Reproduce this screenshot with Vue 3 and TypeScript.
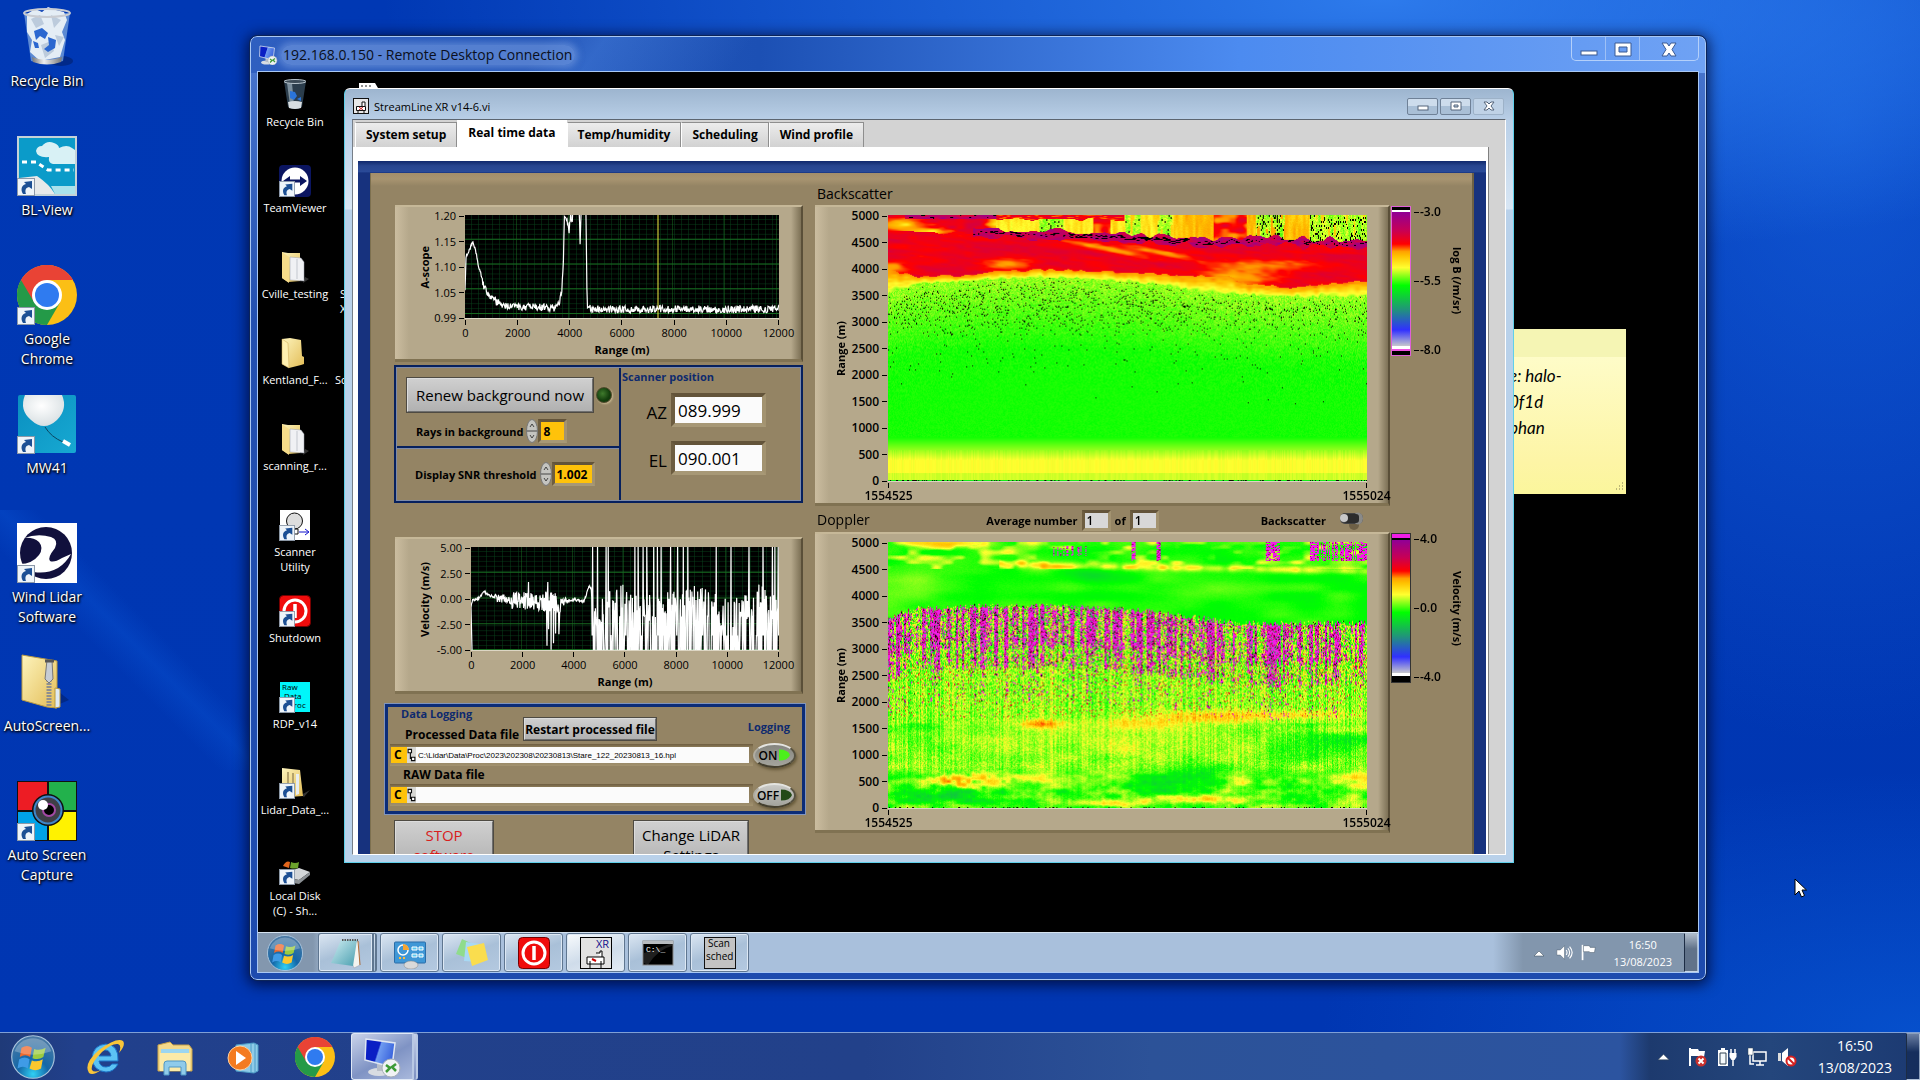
<script setup lang="ts">
import { onMounted, ref } from 'vue'

type Rgb = [number, number, number]
type Knot = [number, number]

interface Shortcut {
  icon: string
  label: string[]
  link?: boolean
}

interface Lettering {
  text: string
  x: number
  y: number
  size: number
  fill?: string
  mono?: boolean
}

const hostIcons: Shortcut[] = [
  { icon: 'bin-full', label: ['Recycle Bin'] },
  { icon: 'blview', label: ['BL-View'], link: true },
  { icon: 'chrome', label: ['Google', 'Chrome'], link: true },
  { icon: 'balloon', label: ['MW41'], link: true },
  { icon: 'windlidar', label: ['Wind Lidar', 'Software'], link: true },
  { icon: 'zip', label: ['AutoScreen...'] },
  { icon: 'capture', label: ['Auto Screen', 'Capture'], link: true },
]

const remoteIcons: Shortcut[] = [
  { icon: 'bin-empty', label: ['Recycle Bin'] },
  { icon: 'teamviewer', label: ['TeamViewer'], link: true },
  { icon: 'folder-doc', label: ['Cville_testing'] },
  { icon: 'folder', label: ['Kentland_F...'] },
  { icon: 'folder-doc', label: ['scanning_r...'] },
  { icon: 'scanner', label: ['Scanner', 'Utility'], link: true },
  { icon: 'power', label: ['Shutdown'], link: true },
  { icon: 'rawdata', label: ['RDP_v14'], link: true },
  { icon: 'folder-open', label: ['Lidar_Data_...'], link: true },
  { icon: 'disk', label: ['Local Disk', '(C) - Sh...'], link: true },
]

const lettering: Record<string, Lettering[]> = {
  rawdata: [
    { text: 'Raw', x: 3, y: 9, size: 8 },
    { text: 'Data', x: 5, y: 18, size: 8 },
    { text: 'Proc', x: 10, y: 27, size: 8 },
  ],
  streamline: [{ text: 'XR', x: 16, y: 11, size: 11, fill: '#11108c' }],
  cmd: [{ text: 'C:\\_', x: 4, y: 15, size: 8, fill: '#fff', mono: true }],
  sched: [
    { text: 'Scan', x: 4, y: 10, size: 10 },
    { text: 'sched', x: 2, y: 23, size: 10 },
  ],
}

const remoteTasks = [
  { icon: 'notepad', name: 'Notepad', stacked: true, active: false },
  { icon: 'control', name: 'Control Panel', stacked: false, active: false },
  { icon: 'sticky', name: 'Sticky Notes', stacked: false, active: false },
  { icon: 'power', name: 'Shutdown', stacked: false, active: false },
  { icon: 'streamline', name: 'StreamLine XR', stacked: false, active: true },
  { icon: 'cmd', name: 'Command Prompt', stacked: false, active: false },
  { icon: 'sched', name: 'Scan scheduler', stacked: false, active: false },
]

const hostTasks = [
  { icon: 'ie', name: 'Internet Explorer' },
  { icon: 'explorer', name: 'Windows Explorer' },
  { icon: 'wmp', name: 'Media Player' },
  { icon: 'chrome', name: 'Google Chrome' },
]

const tabs = ['System setup', 'Real time data', 'Temp/humidity', 'Scheduling', 'Wind profile']
const activeTab = ref('Real time data')

const rangeTicks = ['0', '2000', '4000', '6000', '8000', '10000', '12000']
const heightTicks = ['5000', '4500', '4000', '3500', '3000', '2500', '2000', '1500', '1000', '500', '0']

const rays = ref('8')
const snr = ref('1.002')
const azimuth = ref('089.999')
const elevation = ref('090.001')
const avgIndex = ref('1')
const avgTotal = ref('1')
const processedPath = ref('C:\\Lidar\\Data\\Proc\\2023\\202308\\20230813\\Stare_122_20230813_16.hpl')
const rawPath = ref('')

function hash(x: number, y: number): number {
  let n = (Math.imul(x | 0, 374761393) + Math.imul(y | 0, 668265263)) | 0
  n = Math.imul(n ^ (n >>> 13), 1274126177)
  return ((n ^ (n >>> 16)) >>> 0) / 4294967296
}

function smooth(x: number, y: number): number {
  const xi = Math.floor(x)
  const yi = Math.floor(y)
  const fx = (x - xi) * (x - xi) * (3 - 2 * (x - xi))
  const fy = (y - yi) * (y - yi) * (3 - 2 * (y - yi))
  const a = hash(xi, yi) * (1 - fx) + hash(xi + 1, yi) * fx
  const b = hash(xi, yi + 1) * (1 - fx) + hash(xi + 1, yi + 1) * fx
  return a * (1 - fy) + b * fy
}

function along(knots: Knot[], x: number): number {
  for (let i = 1; i < knots.length; i++) {
    if (x <= knots[i][0]) {
      const [x0, y0] = knots[i - 1]
      const [x1, y1] = knots[i]
      return y0 + ((y1 - y0) * (x - x0)) / (x1 - x0 || 1)
    }
  }
  return knots[knots.length - 1][1]
}

const scale: [number, Rgb][] = [
  [0, [144, 0, 150]],
  [0.12, [200, 0, 84]],
  [0.22, [255, 0, 0]],
  [0.29, [255, 150, 0]],
  [0.34, [255, 190, 0]],
  [0.42, [255, 255, 48]],
  [0.53, [0, 255, 0]],
  [0.7, [32, 150, 120]],
  [0.86, [48, 48, 255]],
  [0.96, [200, 200, 204]],
  [1, [255, 255, 255]],
]

function tint(t: number): Rgb {
  const v = Math.min(1, Math.max(0, t))
  for (let i = 1; i < scale.length; i++) {
    if (v <= scale[i][0]) {
      const [t0, a] = scale[i - 1]
      const [t1, b] = scale[i]
      const k = (v - t0) / (t1 - t0)
      return [a[0] + (b[0] - a[0]) * k, a[1] + (b[1] - a[1]) * k, a[2] + (b[2] - a[2]) * k]
    }
  }
  return [255, 255, 255]
}

const BLACK: Rgb = [0, 0, 0]
const OVER: Rgb = [240, 30, 230]

const cloudBase: Knot[] = [[0, 77], [31, 69], [95, 64], [168, 62], [210, 64], [279, 70], [311, 76], [352, 79], [393, 81], [478, 81]]
const redBase: Knot[] = [[0, 54], [26, 61], [72, 60], [104, 56], [168, 54], [233, 57], [302, 61], [338, 60], [352, 68], [398, 72], [435, 69], [478, 66]]
const purpleLine: Knot[] = [[0, 17], [86, 18], [187, 20], [260, 24], [320, 27], [384, 26], [478, 28]]

function spot(x: number, y: number, cx: number, cy: number, rx: number, ry: number): number {
  const d = ((x - cx) / rx) ** 2 + ((y - cy) / ry) ** 2
  return Math.exp(-d)
}

function backscatter(x: number, y: number): Rgb {
  const fine = hash(x, y) - 0.5
  const base = along(cloudBase, x) + (smooth(x / 4, 9) - 0.5) * 3
  const red = along(redBase, x) + (smooth(x / 6, 3) - 0.5) * 3
  const line = along(purpleLine, x) + (smooth(x / 11, 5) - 0.5) * 3
  if (y > 265) return fine > 0.2 ? BLACK : tint(0.56)
  if (y > base) {
    const depth = y - base
    let t = 0.465 + Math.min(depth, 70) * 0.0008 + fine * 0.06 * Math.max(0.25, 1 - depth / 150)
    if (y > 222) t = 0.525 - Math.min(1, (y - 222) / 24) * 0.105
    if (y > 258) t += 0.02
    if (y > 235) t += (hash(x, 77) - 0.5) * 0.015
    const density = y < 122 ? 0.08 * Math.min(1, depth / 14) * (1 - Math.max(0, y - 92) / 36) : y < 160 ? 0.006 : y < 190 ? 0.0015 : 0
    if (hash(x + 13, y + 500) < density) return BLACK
    return tint(t)
  }
  if (y > red) {
    const k = (y - red) / Math.max(1, base - red)
    return tint(0.28 + k * 0.17 + (smooth(x / 6, y / 2) - 0.5) * 0.05)
  }
  if (x > 84 && Math.abs(y - line) < 1 + smooth(x / 9, 40) * 6) {
    const core = smooth(x / 2.5, y + 11)
    if (Math.abs(y - line) < 2 && core > (x > 180 && x < 325 ? 0.5 : 0.78)) return BLACK
    return tint(0.03 + smooth(x / 6, y / 2) * 0.13)
  }
  if (y < line) {
    if (x < 108) {
      if (y < 4 && x > 16) return smooth(x / 3, y / 2 + 60) > 0.82 ? BLACK : tint(0.03 + smooth(x / 6, y / 3) * 0.14)
      const warm = spot(x, y, 14, 10, 22, 6) + spot(x, y, 108, 7, 10, 9) + spot(x, y, 40, 16, 22, 3)
      return tint(0.18 + warm * 0.19 + (smooth(x / 9, y / 3) - 0.5) * 0.08)
    }
    if (y < 2 + smooth(x / 8, 21) * 4 && x < 236) return tint(0.14 + smooth(x / 4, y) * 0.14)
    const streak = smooth(x / 2.5, y / 16 + 30)
    if ((x > 204 && x < 222) || (x > 324 && x < 358)) return tint(0.16 + smooth(x / 8, y / 5) * 0.16)
    const green = (x > 366 && x < 396) || x > 420 || (x > 236 && x < 252) || (x > 150 && x < 175) || (x > 268 && x < 284)
    if (green && streak > 0.2) {
      if (hash(x, (y >> 1) + 90) < (x > 366 ? 0.14 : 0.06)) return BLACK
      return tint(0.42 + streak * 0.07 + fine * 0.05)
    }
    const warmth = x > 284 && x < 420 ? 0.3 : 0.35
    return tint(warmth + streak * 0.08 + fine * 0.02)
  }
  const slope = y - x * 0.09
  let t = 0.19 + (smooth(x / 34, slope / 5 + 80) - 0.5) * 0.05 + (smooth(x / 8, slope / 2) - 0.5) * 0.035
  t += spot(x, y, 118, 49, 22, 6) * 0.11 + spot(x, y, 215, 33 + (x - 215) * 0.2, 40, 3) * 0.11
  t += spot(x, y, 275, 38 + (x - 275) * 0.2, 34, 3) * 0.12 + spot(x, y, 370, 50, 50, 6) * 0.1
  t += spot(x, y, 345, 64, 40, 10) * 0.12 + spot(x, y, 0, 52, 18, 6) * 0.1
  return tint(t)
}

const layerBase: Knot[] = [[0, 76], [31, 66], [86, 64], [168, 64], [210, 66], [256, 69], [302, 75], [348, 81], [478, 81]]

function doppler(x: number, y: number): Rgb {
  const fine = hash(x + 900, y) - 0.5
  const column = hash(x, 4000)
  const base = along(layerBase, x) + (hash(x, 31) - 0.5) * 6
  const wide = smooth(x / 30, y / 9 + 200) - 0.5
  if (y > 265 && hash(x, 8) > 0.85) return BLACK
  if (y < base) {
    if (y < 19) {
      const hot = (x > 420 && column > 0.25) || (x > 376 && x < 391) || (x > 242 && x < 247) || (x > 267 && x < 272) || (x > 160 && x < 198 && column > 0.72 && y > 3 && y < 14)
      if (hot && hash(x >> 1, y + 60) > 0.25) return fine > 0.34 ? tint(0.05) : OVER
    }
    let t = 0.52 + wide * 0.05
    if (y < 27) t -= Math.max(0, smooth(x / 12, y / 5 + 70) - 0.5) * 0.2
    t -= spot(x, y, 65, 1, 40, 4) * 0.14
    t -= x > 110 ? spot(x, y, x, 20 + x * 0.018, 1, 3.5) * (0.04 + smooth(x / 7, 300) * 0.09) : 0
    t -= spot(x, y, 5, 46, 70, 16) * 0.045 + spot(x, y, 320, 48, 70, 9) * 0.025
    t += spot(x, y, 200, 33, 25, 6) * 0.05
    return tint(t + fine * 0.01)
  }
  const depth = y - base
  const band = spot(x, y, 153, 182, 20, 4) * 0.17 + spot(x, y, 250, 182, 50, 6) * 0.08 + spot(x, y, 320, 175, 50, 6) * 0.11 + spot(x, y, 405, 173, 50, 4) * 0.08
  if (y < 182) {
    const strong = x < 330 ? 1 : 0.75
    const stripe = hash(x >> 1, 610)
    const reach = depth < 40 ? 0.9 : depth < 62 ? 0.55 : depth < 95 ? 0.22 : 0.12 * (1 - (y - 140) / 44)
    const gain = 0.2 + stripe * stripe * 1.1 + smooth(x / 5, 620) * 0.25 + (x > 380 && x < 392 ? 0.5 : 0) + (x > 258 && x < 262 ? 0.6 : 0)
    const p = hash(x >> 1, (y >> 2) + 7000) * 0.5 + hash(x, y + 7500) * 0.5
    if (p < reach * gain * strong) {
      const k = hash(x + 77, y)
      if (k > 0.94) return BLACK
      if (k > 0.7) return tint(0.02 + k * 0.1)
      if (k > 0.62) return tint(0.64)
      return OVER
    }
    const grain = depth < 60 ? 0.2 : 0.14 - ((y - 125) / 57) * 0.05
    let t = 0.465 + fine * grain + (column - 0.5) * 0.08 - band
    if (y > 110 && y < 176 && hash(x, y + 33) > 0.97) t = 0.2
    return tint(t)
  }
  let t = 0.465 + (column - 0.5) * 0.06 + fine * 0.07 + wide * 0.05 - band
  t -= spot(x, y, 440, 188, 40, 4) * 0.06 + spot(x, y, 250, 205, 70, 12) * 0.025
  t += spot(x, y, 440, 198, 60, 18) * 0.07 + spot(x, y, 35, 186, 22, 6) * 0.06
  t += spot(x, y, 310, 236, 40, 12) * 0.12
  if (y > 225) {
    const k = Math.min(1, (y - 225) / 10)
    t = t * (1 - k * 0.6) + 0.52 * k * 0.6
    t += (smooth(x / 16, y / 5 + 500) - 0.5) * 0.1 * k + (smooth(x / 5, y / 3 + 900) - 0.5) * 0.05 * k
    t -= spot(x, y, 80, 239, 34, 6) * 0.22 * smooth(x / 5, y / 4) * 1.6 + spot(x, y, 150, 236, 22, 5) * 0.13
    t -= spot(x, y, 310, 258, 50, 4) * 0.13 + spot(x, y, 220, 262, 40, 3) * 0.1 + spot(x, y, 350, 242, 14, 6) * 0.1
    t -= spot(x, y, 470, 238, 22, 8) * 0.1
    t += spot(x, y, 60, 254, 60, 6) * 0.09 + spot(x, y, 270, 246, 30, 8) * 0.07
  }
  return tint(t)
}

const backscatterMap = ref<HTMLCanvasElement | null>(null)
const dopplerMap = ref<HTMLCanvasElement | null>(null)

function paint(canvas: HTMLCanvasElement | null, field: (x: number, y: number) => Rgb) {
  const ctx = canvas?.getContext('2d')
  if (!canvas || !ctx) return
  const image = ctx.createImageData(canvas.width, canvas.height)
  for (let y = 0; y < canvas.height; y++) {
    for (let x = 0; x < canvas.width; x++) {
      const [r, g, b] = field(x, y)
      const i = (y * canvas.width + x) * 4
      image.data[i] = r
      image.data[i + 1] = g
      image.data[i + 2] = b
      image.data[i + 3] = 255
    }
  }
  ctx.putImageData(image, 0, 0)
}

onMounted(() => {
  paint(backscatterMap.value, backscatter)
  paint(dopplerMap.value, doppler)
})

const scopeKnots: Knot[] = [
  [0, 1.045], [40, 1.115], [180, 1.13], [300, 1.146], [400, 1.13], [500, 1.1], [650, 1.066], [850, 1.038],
  [1100, 1.025], [1500, 1.016], [2000, 1.013], [3400, 1.011], [3600, 1.02], [3700, 1.05], [3750, 1.09],
  [3800, 1.2], [3900, 1.19], [3980, 1.17], [4040, 1.2], [4100, 1.19], [4140, 1.22], [4360, 1.22],
  [4400, 1.14], [4440, 1.22], [4620, 1.22], [4670, 1.016], [4800, 1.008], [12000, 1.008],
]

function scopeLine(): string {
  const pts: string[] = []
  for (let r = 0; r <= 12000; r += 20) {
    const noise = (hash(r, 1) - 0.5) * (r < 600 ? 0.006 : 0.015)
    const v = Math.min(1.21, along(scopeKnots, r) + noise)
    pts.push(`${((r / 12000) * 314).toFixed(1)},${(((1.2 - v) / 0.21) * 104).toFixed(1)}`)
  }
  return pts.join(' ')
}

const velocityKnots: Knot[] = [[0, -0.8], [60, -0.2], [300, 0], [500, 0.7], [700, 0.3], [1200, 0], [1500, -0.2], [2700, -0.3], [3500, -0.4], [4000, -0.1], [4400, -0.3], [4600, 1.2], [4680, 0.9]]

function velocityLine(): string {
  const pts: string[] = ['1,104']
  for (let r = 0; r <= 12000; r += 16) {
    const n = hash(r, 12) - 0.5
    const k = hash(r, 13)
    let v = 0
    if (r < 4700) {
      const amp = r < 900 ? 0.2 : r < 1600 ? 0.8 : r < 2700 ? 1.7 : r < 3480 ? 2 : r < 3700 ? 0.8 : 0.25
      v = along(velocityKnots, r) + n * amp
      if (r > 2700 && r < 3450 && k > 0.7) v = -0.6 - k * 5 * hash(r, 19)
      if (r > 1600 && r < 3400 && k < 0.01) v = 1.6
    } else {
      v = -0.8 + n * 3.4 + Math.sin(r / 420) * 0.5
      if (k > 0.93) v = 5.4
      else if (k < 0.5) v = k < 0.4 ? -5.4 : -3.6
    }
    v = Math.max(-5.1, Math.min(5.1, v))
    pts.push(`${((r / 12000) * 308).toFixed(1)},${(((5 - v) / 10) * 104).toFixed(1)}`)
  }
  return pts.join(' ')
}

const scopeTrace = scopeLine()
const velocityTrace = velocityLine()
</script>

<template>
  <svg class="sprite" aria-hidden="true">
    <defs>
      <linearGradient id="g-folder" x1="0" y1="0" x2="1" y2="1">
        <stop offset="0" stop-color="#fdf4bd" /><stop offset="1" stop-color="#e3bd57" />
      </linearGradient>
      <linearGradient id="g-screen" x1="0" y1="0" x2="1" y2="0.3">
        <stop offset="0" stop-color="#0a1fc4" /><stop offset="0.5" stop-color="#0a1fc4" /><stop offset="0.55" stop-color="#6f9bf0" /><stop offset="1" stop-color="#3c66de" />
      </linearGradient>
      <linearGradient id="g-teal" x1="0" y1="0" x2="1" y2="1">
        <stop offset="0" stop-color="#0a8fc0" /><stop offset="1" stop-color="#17a9d2" />
      </linearGradient>
      <radialGradient id="g-orb" cx="0.5" cy="0.9" r="0.9">
        <stop offset="0" stop-color="#2fd0f4" /><stop offset="0.4" stop-color="#1467a8" /><stop offset="1" stop-color="#4d7aa4" />
      </radialGradient>
      <radialGradient id="g-balloon" cx="0.45" cy="0.35" r="0.7">
        <stop offset="0" stop-color="#ffffff" /><stop offset="1" stop-color="#d5dde0" />
      </radialGradient>
      <linearGradient id="g-note" x1="0" y1="0" x2="1" y2="1">
        <stop offset="0" stop-color="#cfeef2" /><stop offset="1" stop-color="#4a9fb0" />
      </linearGradient>
      <linearGradient id="g-metal" x1="0" y1="0" x2="1" y2="0">
        <stop offset="0" stop-color="#777" /><stop offset="0.4" stop-color="#eee" /><stop offset="1" stop-color="#777" />
      </linearGradient>
    </defs>
    <symbol id="arrow" viewBox="0 0 18 18">
      <rect x="0.5" y="0.5" width="17" height="17" fill="#eef4fa" stroke="#8c98a8" />
      <path d="M6 16c-3-5-1-9 3-10L7 4l8-1v8l-3-2c-4 1-4 4-3 7z" fill="#1c4f94" />
    </symbol>
    <symbol id="bin-full" viewBox="0 0 60 60">
      <ellipse cx="44" cy="54" rx="12" ry="5" fill="#02206c" opacity="0.6" />
      <path d="M7 6l7 48q16 5 32 0l7-48z" fill="#7ba5de" opacity="0.75" />
      <path d="M10 7l8-5 7 3 6-5 8 3 8 2 3 8-5 12 3 8-5 17-20 4-10-9 2-12-5-8z" fill="#e4edf5" />
      <path d="M14 12l9-4 4 9-8 4zM34 8l10 5-7 8zM24 38l10-4 3 10-9 7zM38 28l9 2-5 9z" fill="#bccbdc" />
      <path d="M17 24l8-3 6 5-3 6-5-3-4 4zM31 30l8 3-1 8-7 4-4-3 5-4zM16 34l5 2 1 5-4 0z" fill="#2b67d0" />
      <ellipse cx="30" cy="6" rx="23" ry="4" fill="none" stroke="#c9ccd2" stroke-width="2" />
      <path d="M15 50q15 6 30 0l-1 5q-14 5-28 0z" fill="url(#g-metal)" />
    </symbol>
    <symbol id="blview" viewBox="0 0 60 60">
      <rect width="60" height="60" fill="#c4d2d8" /><rect x="2" y="2" width="56" height="56" fill="#0b9bc9" />
      <path d="M19 15q1-5 6-5 5-6 12-3 5 2 5 5 8-4 13 0l3 2v14H36q-5-1-4-7-12 1-13-6z" fill="#d8f1f5" />
      <path d="M5 26h14l12 8h26" fill="none" stroke="#fff" stroke-width="3" stroke-dasharray="5 4" />
      <path d="M2 58V42l18-2q12 8 18 18z" fill="#e7e9ea" /><path d="M34 50h24v8H38z" fill="#a9e2ec" />
    </symbol>
    <symbol id="chrome" viewBox="0 0 60 60">
      <circle cx="30" cy="30" r="30" fill="#fbbf15" />
      <path d="M4 15a30 30 0 0 0 26 45l13-22.500L30 30z" fill="#249a48" />
      <path d="M4 15a30 30 0 0 1 52 0H30L17 37z" fill="#e94335" />
      <circle cx="30" cy="30" r="15" fill="#fff" /><circle cx="30" cy="30" r="12" fill="#2f7bf0" />
    </symbol>
    <symbol id="balloon" viewBox="0 0 60 60">
      <rect x="1" y="1" width="58" height="58" rx="2" fill="url(#g-teal)" />
      <path d="M8 1h37q6 14-5 25-13 12-26 0Q2 16 8 1z" fill="url(#g-balloon)" />
      <path d="M28 33q6 10 18 15" fill="none" stroke="#0b4560" /><path d="M46 47l7 4" stroke="#fff" stroke-width="4" />
    </symbol>
    <symbol id="windlidar" viewBox="0 0 60 60">
      <rect width="60" height="60" fill="#fff" /><circle cx="29" cy="30" r="26" fill="#11103c" />
      <path d="M7 15q14-5 27-1 8 3 4 11-8 10-5 13 4 2 12-3l9-4q-5 9-13 14-11 6-24 4L3 41q12 0 19-9 5-7 0-13Q16 14 7 15z" fill="#fff" />
    </symbol>
    <symbol id="zip" viewBox="0 0 60 60">
      <path d="M38 54l14-6-10-8z" fill="#02206c" opacity="0.6" />
      <path d="M5 3l35 6v47l-10-1L5 48z" fill="url(#g-folder)" stroke="#b99a43" />
      <path d="M38 36l5 1v18l-5 1z" fill="#dfeaf5" stroke="#b99a43" />
      <path d="M32 28v27" stroke="#8f8f8f" stroke-width="5" stroke-dasharray="2 1" />
      <path d="M30 8h5l1 19-4 4-4-4z" fill="#c6ccd4" stroke="#777" />
      <path d="M28 9h9" stroke="#555" stroke-width="3" />
    </symbol>
    <symbol id="capture" viewBox="0 0 60 60">
      <rect width="60" height="60" fill="#111" />
      <path d="M1 1h29v28H1z" fill="#ed1c24" /><path d="M32 1h27v28H32z" fill="#22b14c" />
      <path d="M1 31h29v28H1z" fill="#00a2e8" /><path d="M32 31h27v28H32z" fill="#fff200" />
      <circle cx="31" cy="29" r="16" fill="#111" /><circle cx="31" cy="29" r="13.500" fill="#3f3f46" stroke="#3f86c8" stroke-width="2" />
      <circle cx="32" cy="29" r="6" fill="#000" stroke="#a349a4" stroke-width="2" /><circle cx="26" cy="24" r="5" fill="#fff" />
    </symbol>
    <symbol id="bin-empty" viewBox="0 0 32 32">
      <path d="M5 2l4 26q7 4 14 0l4-26z" fill="#2b3d4c" /><path d="M8 4l3 22h4L13 4z" fill="#7b8e9c" />
      <path d="M11 12l5 1 2 4-3 4-4-2zM18 20l4-2v4z" fill="#2a74d8" />
      <path d="M9 23q7-2 14 0l-1 6q-6 2-12 0z" fill="#d8dde0" />
      <ellipse cx="16" cy="2.500" rx="11" ry="2" fill="#3b4a56" stroke="#b8c4cc" />
    </symbol>
    <symbol id="teamviewer" viewBox="0 0 32 32">
      <rect width="32" height="32" rx="4" fill="#0b1560" /><circle cx="16" cy="16" r="13.500" fill="#fff" />
      <path d="M4 16l7-5v3.500h10V11l7 5-7 5v-3.500H11V21z" fill="#0b1560" />
    </symbol>
    <symbol id="folder" viewBox="0 0 32 32">
      <path d="M3 2l8-1 11 2 1 16 2 1v7l-3 1-12 3-7-4z" fill="url(#g-folder)" /><path d="M3 2l6 4 1 25-7-4z" fill="#fff0b0" stroke="#caa550" stroke-width="0.500" />
    </symbol>
    <symbol id="folder-doc" viewBox="0 0 32 32">
      <path d="M26 26l4 2-6 4z" fill="#333" />
      <path d="M3 1l6 1 12 0v28l-12 1-6-4z" fill="url(#g-folder)" />
      <path d="M11 6l11 1 3 4v19l-14-1z" fill="#f0f1f4" stroke="#9a9fa8" stroke-width="0.500" /><path d="M18 8v20" stroke="#c3c7ce" />
      <path d="M3 1l7 5v26l-7-5z" fill="#f6dc8a" />
    </symbol>
    <symbol id="folder-open" viewBox="0 0 32 32">
      <path d="M22 28l9-5-6 7z" fill="#333" />
      <path d="M3 1l18 2 3 26-14 1-7-4z" fill="url(#g-folder)" /><path d="M9 5v24M14 6v24" stroke="#b4a26c" stroke-width="2" /><path d="M17 7l3 0v20l-3 1z" fill="#e8edf0" />
    </symbol>
    <symbol id="scanner" viewBox="0 0 32 32">
      <rect x="1" y="1" width="30" height="30" fill="#fff" /><circle cx="15.500" cy="12" r="8" fill="#ddd" stroke="#111" />
      <path d="M13 20h6v5h-6z" fill="none" stroke="#111" /><path d="M20 23h9M26 20l4 3-4 3" fill="none" stroke="#11c" />
    </symbol>
    <symbol id="power" viewBox="0 0 32 32">
      <rect x="0.500" y="0.500" width="31" height="31" rx="4" fill="#f00c0c" stroke="#700" />
      <circle cx="16" cy="16" r="11" fill="none" stroke="#fff" stroke-width="3" /><path d="M16 9v14" stroke="#fff" stroke-width="3.500" />
    </symbol>
    <symbol id="rawdata" viewBox="0 0 32 32">
      <rect x="1" y="1" width="30" height="30" fill="#00f6fa" />
    </symbol>
    <symbol id="disk" viewBox="0 0 32 32">
      <path d="M4 13q3-6 7-4l-1 6z" fill="#e2661c" /><path d="M12 9q4 2 8 0l-1 6q-4 1-8 0z" fill="#6ca32c" />
      <path d="M8 19l12-4 11 4-11 8-12-2z" fill="#d3d6d8" /><path d="M8 25l12 2 11-8v3l-11 9-12-2z" fill="#8b9094" />
    </symbol>
    <symbol id="orb" viewBox="0 0 40 40">
      <circle cx="20" cy="20" r="18.500" fill="url(#g-orb)" stroke="#a9c4dc" />
      <path d="M10 12q5-3 9 0l-1.500 8q-4-3-9 0z" fill="#ef6a2e" /><path d="M21 13q5 2 10-1l-2 8q-4 3-9.500 1z" fill="#9bcb40" />
      <path d="M8 22q5-3 9 0l-1.500 8q-4-3-9 0z" fill="#3f9be6" /><path d="M19 23q5 2 9.500-1L27 30q-5 3-10 0z" fill="#fbc72e" />
      <path d="M4 15a17 17 0 0 1 32 0q-16 6-32 0z" fill="#fff" opacity="0.250" />
    </symbol>
    <symbol id="notepad" viewBox="0 0 32 32">
      <path d="M12 3l17 2 1 23-6 3z" fill="#f4f4f0" stroke="#99a" stroke-width="0.500" /><path d="M11 3h16l-4 26L1 26z" fill="url(#g-note)" />
      <path d="M12 3h16" stroke="#555" stroke-width="2" stroke-dasharray="1.500 1" /><path d="M28 4l2 24" stroke="#b06f3a" />
    </symbol>
    <symbol id="control" viewBox="0 0 32 32">
      <rect x="0.500" y="5" width="31" height="21" rx="1" fill="#3f97d6" stroke="#2a6da8" />
      <circle cx="9" cy="13" r="5" fill="none" stroke="#fff" stroke-width="1.500" /><path d="M9 13V7a6 6 0 0 1 6 6z" fill="#f5a531" />
      <path d="M18 10h5v3h-5zM25 10h4v3h-4zM18 17h5v3h-5zM25 17h4v3h-4z" fill="#5bc8f0" stroke="#fff" />
      <path d="M5 21h2M9 21h2" stroke="#fb3" stroke-width="2" /><ellipse cx="17" cy="28" rx="7" ry="4" fill="#d9d9d9" stroke="#888" stroke-width="0.500" />
    </symbol>
    <symbol id="sticky" viewBox="0 0 32 32">
      <path d="M6 2l13 6-5 14L0 17z" fill="#8fdc8c" /><path d="M10 5l14 2-2 18-14-1z" fill="#a8d9f4" /><path d="M11 10l17-4 4 17-16 6z" fill="#fadd4e" />
    </symbol>
    <symbol id="streamline" viewBox="0 0 32 32">
      <rect x="0.500" y="0.500" width="31" height="31" fill="#e2e2e2" stroke="#000" />
      <path d="M7 20h17v7H7zM10 31v-7M21 31v-7M16 16h4v-2h2v6" fill="#fff" stroke="#000" /><path d="M12 22l4 2" stroke="#c00" stroke-width="2" />
    </symbol>
    <symbol id="vi" viewBox="0 0 16 16">
      <rect x="0.500" y="0.500" width="15" height="15" fill="#e8e8e8" stroke="#111" />
      <path d="M3.500 8.500h9v4h-9zM5 16v-4M11 16v-4M9 8V4h3v4" fill="#fff" stroke="#111" /><path d="M6 9l4 3M10 9l-4 3" stroke="#c22" />
    </symbol>
    <symbol id="cmd" viewBox="0 0 32 32">
      <rect x="1" y="4" width="30" height="24" fill="#000" stroke="#888" /><rect x="1" y="4" width="30" height="3" fill="#b8bcc0" />
      <path d="M2 26V16q14-4 28-10v3Q16 12 6 28z" fill="#fff" opacity="0.120" />
    </symbol>
    <symbol id="sched" viewBox="0 0 32 32">
      <rect x="0.500" y="0.500" width="31" height="31" fill="#c3c3c3" stroke="#111" />
    </symbol>
    <symbol id="ie" viewBox="0 0 40 40">
      <path d="M33 24H14q1 6 7 6 4 0 6-3h6q-4 8-12 8-13-1-14-14Q8 8 21 7q13 1 12 17zM14 19h12q-1-6-6-6t-6 6z" fill="#5cc3f4" stroke="#1c74c8" />
      <path d="M4 36Q-2 27 14 13 32 0 38 4q3 4-4 12 3-8-1-9-6-1-16 8Q5 27 7 33q2 3 9 0-8 6-12 3z" fill="#f8c53a" />
    </symbol>
    <symbol id="explorer" viewBox="0 0 40 40">
      <path d="M3 8l12-3 3 3h16l3 4v22H3z" fill="#f3d98a" stroke="#c8a248" /><path d="M6 12h28v10H6z" fill="#9cd6f0" /><path d="M5 16h30v18H5z" fill="#fbeaa8" />
      <path d="M9 38V27q0-3 3-3h16q3 0 3 3v11h-5v-8H14v8z" fill="#8fcbea" stroke="#4e96c4" />
    </symbol>
    <symbol id="wmp" viewBox="0 0 40 40">
      <path d="M11 8l18-2 4 2v26l-4 2-18-2z" fill="#8ecbe8" stroke="#4c9cc6" /><path d="M26 7v29M30 7v28" stroke="#4c9cc6" />
      <circle cx="15" cy="21" r="12" fill="#f47b20" stroke="#fbd0a0" /><path d="M11 14l10 7-10 7z" fill="#fff" />
    </symbol>
    <symbol id="rdp" viewBox="0 0 40 40">
      <ellipse cx="17" cy="35" rx="11" ry="4" fill="#d8dce2" /><path d="M15 26h7l1 8h-8z" fill="#b8bec8" />
      <path d="M4 2l29 4-3 24L3 23z" fill="url(#g-screen)" stroke="#dfe6f2" stroke-width="1.500" />
      <circle cx="29" cy="31" r="9" fill="#f0f2f4" stroke="#a8b0b8" /><path d="M24 28l4 3-4 4M34 27l-4 3 4 4" fill="none" stroke="#3d9b35" stroke-width="2.500" />
    </symbol>
    <symbol id="flag" viewBox="0 0 20 20">
      <path d="M3 19V1" stroke="#fff" stroke-width="2" /><path d="M4 2h7l1 2h6l-1 6h-5l-1-1H4z" fill="#fff" stroke="#345" stroke-width="0.500" />
    </symbol>
    <symbol id="flag-alert" viewBox="0 0 20 20">
      <path d="M3 19V1" stroke="#fff" stroke-width="2" /><path d="M4 2h7l1 2h6l-1 6h-5l-1-1H4z" fill="#fff" />
      <circle cx="14" cy="14" r="5.500" fill="#c9302c" /><path d="M11.500 11.500l5 5M16.500 11.500l-5 5" stroke="#fff" stroke-width="2" />
    </symbol>
    <symbol id="battery" viewBox="0 0 20 20">
      <path d="M1 3h3V1h4v2h3v16H1z" fill="#fff" /><path d="M3 6h6v11H3z" fill="#f6fafc" stroke="#345" />
      <path d="M14 2v4M18 2v4M16 12v7" stroke="#fff" stroke-width="1.500" /><path d="M12.500 6h7v4l-2 3h-3l-2-3z" fill="#fff" />
    </symbol>
    <symbol id="network" viewBox="0 0 20 20">
      <rect x="6" y="5" width="13" height="9" fill="#22406e" stroke="#fff" stroke-width="1.500" /><path d="M9 18h8M13 14v4M3 8v9h4" fill="none" stroke="#fff" stroke-width="1.500" />
      <path d="M1 1h5v7H1z" fill="#fff" stroke="#345" stroke-width="0.500" />
    </symbol>
    <symbol id="speaker-off" viewBox="0 0 20 20">
      <path d="M1 6h3v8H1z" fill="#ddd" /><path d="M5 6l6-5v18l-6-5z" fill="#fff" /><circle cx="14" cy="14" r="4.500" fill="#fff" stroke="#d42020" stroke-width="2" /><path d="M11 11l6 6" stroke="#d42020" stroke-width="2" />
    </symbol>
    <symbol id="speaker" viewBox="0 0 20 20">
      <path d="M1 7h4l5-5v16l-5-5H1z" fill="#fff" stroke="#456" stroke-width="0.500" /><path d="M12 7q2 3 0 6M14 5q4 5 0 10M16 3q6 7 0 14" fill="none" stroke="#fff" stroke-width="1.300" />
    </symbol>
    <symbol id="caret" viewBox="0 0 10 10"><path d="M0 8l5-5 5 5z" fill="#fff" stroke="#345" stroke-width="0.500" /></symbol>
  </svg>

  <div class="screen">
    <main class="desktop">
      <ul class="shortcuts host">
        <li v-for="s in hostIcons" :key="s.label[0]">
          <span class="pic"><svg class="art"><use :href="'#' + s.icon" /></svg><svg v-if="s.link" class="badge"><use href="#arrow" /></svg></span>
          <span v-for="line in s.label" :key="line">{{ line }}</span>
        </li>
      </ul>

      <section class="rdp">
        <header class="rdp-title">
          <svg class="rdp-icon"><use href="#rdp" /></svg>
          <h1>192.168.0.150 - Remote Desktop Connection</h1>
          <div class="rdp-controls">
            <button aria-label="Minimize"><svg viewBox="0 0 18 18"><rect x="1" y="11" width="16" height="4" fill="#fff" stroke="#3a5a94" /></svg></button>
            <button aria-label="Maximize"><svg viewBox="0 0 18 18"><path d="M1 3h16v13H1zM5 7h8v5H5z" fill="#fff" fill-rule="evenodd" stroke="#3a5a94" /></svg></button>
            <button class="close" aria-label="Close"><svg viewBox="0 0 18 18"><path d="M2 3h5l2 3 2-3h5l-4 6.500 4 6.500h-5l-2-3-2 3H2l4-6.500z" fill="#fff" stroke="#3a5a94" /></svg></button>
          </div>
        </header>

        <div class="remote">
          <div class="remote-desk">
            <ul class="shortcuts guest">
              <li v-for="s in remoteIcons" :key="s.label[0]">
                <span class="pic">
                  <svg class="art" viewBox="0 0 32 32">
                    <use :href="'#' + s.icon" />
                    <text v-for="l in lettering[s.icon] ?? []" :key="l.text" :x="l.x" :y="l.y" :font-size="l.size">{{ l.text }}</text>
                  </svg>
                  <svg v-if="s.link" class="badge"><use href="#arrow" /></svg>
                </span>
                <span v-for="line in s.label" :key="line">{{ line }}</span>
              </li>
            </ul>
            <svg class="peek-icon" viewBox="0 0 20 8"><path d="M0 0h16l3 5v3H0z" fill="#fff" /><path d="M2 3h12" stroke="#222" stroke-dasharray="2 2" /></svg>
            <p class="peek first">S<br />X</p>
            <p class="peek second">Sc</p>

            <aside class="note">
              <p>e: halo-<br />0f1d<br />phan</p>
              <svg class="grip" viewBox="0 0 10 10"><path d="M8 1h1M5 4h1M8 4h1M2 7h1M5 7h1M8 7h1" stroke="#a8a46c" stroke-width="1.500" /></svg>
            </aside>

            <section class="vi">
              <header class="vi-title">
                <svg class="vi-icon"><use href="#vi" /></svg>
                <h2>StreamLine XR v14-6.vi</h2>
                <button aria-label="Minimize window"><svg viewBox="0 0 12 12"><rect x="1" y="6" width="10" height="4" fill="#fff" stroke="#55657a" /></svg></button>
                <button aria-label="Restore window"><svg viewBox="0 0 12 12"><path d="M1 2h10v8H1zM4 5h4v2H4z" fill="#fff" fill-rule="evenodd" stroke="#55657a" /></svg></button>
                <button class="dim" aria-label="Close window"><svg viewBox="0 0 12 12"><path d="M1 2h3l2 2 2-2h3L8 6l3 4H8L6 8l-2 2H1l3-4z" fill="#fff" stroke="#55657a" /></svg></button>
              </header>

              <div class="vi-client">
                <nav class="tabs">
                  <button v-for="t in tabs" :key="t" :class="{ on: t === activeTab }" @click="activeTab = t">{{ t }}</button>
                </nav>
                <div class="page">
                  <div class="frame">
                    <div class="board">
                      <div class="left">
                        <figure class="raised graph">
                          <figcaption class="side">A-scope</figcaption>
                          <ul class="yticks"><li v-for="t in ['1.20', '1.15', '1.10', '1.05', '0.99']" :key="t">{{ t }}</li></ul>
                          <svg class="plot" viewBox="0 0 314 104" preserveAspectRatio="none">
                            <defs>
                              <pattern id="minor-a" width="7" height="5" patternUnits="userSpaceOnUse"><path d="M7 0v5M0 5h7" stroke="#08401a" fill="none" /></pattern>
                              <pattern id="major-a" width="52" height="25" patternUnits="userSpaceOnUse"><path d="M52 0v25M0 24.500h52" stroke="#176a20" fill="none" /></pattern>
                            </defs>
                            <rect width="314" height="104" fill="#000" /><rect width="314" height="104" fill="url(#minor-a)" /><rect width="314" height="104" fill="url(#major-a)" />
                            <path d="M193 0v104" stroke="#f4f044" /><polyline :points="scopeTrace" fill="none" stroke="#fff" stroke-width="1.200" />
                          </svg>
                          <ul class="xticks"><li v-for="t in rangeTicks" :key="t"><span>{{ t }}</span></li></ul>
                          <p class="xname">Range (m)</p>
                        </figure>

                        <div class="params">
                          <div class="cell renew">
                            <div class="line">
                              <button class="key big">Renew background now</button>
                              <span class="led"></span>
                            </div>
                            <div class="line rays">
                              <label for="rays">Rays in background</label>
                              <svg class="spin" viewBox="0 0 12 24"><ellipse cx="6" cy="12" rx="5.500" ry="11.500" fill="#c4c4c0" stroke="#777" /><path d="M1 12h10M4 8l2-3 2 3M4 16l2 3 2-3" fill="none" stroke="#444" /></svg>
                              <input id="rays" v-model="rays" class="amber short" />
                            </div>
                          </div>
                          <div class="cell position">
                            <h3>Scanner position</h3>
                            <div class="line"><label for="az">AZ</label><input id="az" v-model="azimuth" class="big-num" /></div>
                            <div class="line"><label for="el">EL</label><input id="el" v-model="elevation" class="big-num" /></div>
                          </div>
                          <div class="cell snr">
                            <div class="line">
                              <label for="snr">Display SNR threshold</label>
                              <svg class="spin" viewBox="0 0 12 24"><ellipse cx="6" cy="12" rx="5.500" ry="11.500" fill="#c4c4c0" stroke="#777" /><path d="M1 12h10M4 8l2-3 2 3M4 16l2 3 2-3" fill="none" stroke="#444" /></svg>
                              <input id="snr" v-model="snr" class="amber" />
                            </div>
                          </div>
                        </div>

                        <figure class="raised graph velocity">
                          <figcaption class="side">Velocity (m/s)</figcaption>
                          <ul class="yticks"><li v-for="t in ['5.00', '2.50', '0.00', '-2.50', '-5.00']" :key="t">{{ t }}</li></ul>
                          <svg class="plot" viewBox="0 0 308 104" preserveAspectRatio="none">
                            <defs>
                              <pattern id="minor-v" width="8" height="5" patternUnits="userSpaceOnUse"><path d="M8 0v5M0 5h8" stroke="#08401a" fill="none" /></pattern>
                              <pattern id="major-v" width="51" height="26" patternUnits="userSpaceOnUse"><path d="M51 0v26M0 25.500h51" stroke="#176a20" fill="none" /></pattern>
                            </defs>
                            <rect width="308" height="104" fill="#000" /><rect width="308" height="104" fill="url(#minor-v)" /><rect width="308" height="104" fill="url(#major-v)" />
                            <polyline :points="velocityTrace" fill="none" stroke="#fff" stroke-width="1.200" />
                          </svg>
                          <ul class="xticks"><li v-for="t in rangeTicks" :key="t"><span>{{ t }}</span></li></ul>
                          <p class="xname">Range (m)</p>
                        </figure>

                        <div class="logging">
                          <div class="log-head">
                            <div class="log-names">
                              <h3>Data Logging</h3>
                              <label for="proc">Processed Data file</label>
                            </div>
                            <button class="key">Restart processed file</button>
                            <h3 class="log-side">Logging</h3>
                          </div>
                          <div class="log-row">
                            <div class="path"><span>C</span><svg viewBox="0 0 8 14"><path d="M1 2h3v3H1zM4 9h3v3H4zM3 5v5h1" fill="#fff" stroke="#111" /></svg><input id="proc" v-model="processedPath" /></div>
                            <button class="oval on">ON<svg viewBox="0 0 12 14"><path d="M0 1q10 0 12 6-2 6-12 6z" /></svg></button>
                          </div>
                          <label class="raw-name" for="raw">RAW Data file</label>
                          <div class="log-row">
                            <div class="path"><span>C</span><svg viewBox="0 0 8 14"><path d="M1 2h3v3H1zM4 9h3v3H4zM3 5v5h1" fill="#fff" stroke="#111" /></svg><input id="raw" v-model="rawPath" /></div>
                            <button class="oval">OFF<svg viewBox="0 0 12 14"><path d="M0 1q10 0 12 6-2 6-12 6z" /></svg></button>
                          </div>
                        </div>

                        <div class="actions">
                          <button class="key big stop">STOP<br />software</button>
                          <button class="key big">Change LiDAR<br />Settings</button>
                        </div>
                      </div>

                      <div class="right">
                        <h3 class="chart-name">Backscatter</h3>
                        <div class="chart">
                          <figure class="raised heat">
                            <figcaption class="side">Range (m)</figcaption>
                            <ul class="yticks"><li v-for="t in heightTicks" :key="t">{{ t }}</li></ul>
                            <canvas ref="backscatterMap" width="478" height="267"></canvas>
                            <ul class="xticks"><li><span>1554525</span></li><li><span>1555024</span></li></ul>
                          </figure>
                          <div class="ramp">
                            <span class="ramp-bar first"></span>
                            <ul><li>-3.0</li><li>-5.5</li><li>-8.0</li></ul>
                            <p>log B (/m/sr)</p>
                          </div>
                        </div>
                        <div class="doppler-head">
                          <h3 class="chart-name">Doppler</h3>
                          <label for="avg">Average number</label>
                          <input id="avg" v-model="avgIndex" />
                          <label for="avg-of">of</label>
                          <input id="avg-of" v-model="avgTotal" />
                          <span class="switch-name">Backscatter</span>
                          <button class="switch" aria-label="Backscatter"><svg viewBox="0 0 26 22"><ellipse cx="16" cy="16" rx="5" ry="5" fill="#6e6046" /><rect x="2" y="4" width="23" height="11" rx="5" fill="#444" /><ellipse cx="20" cy="9.500" rx="5" ry="6" fill="#8a8a88" /><rect x="6" y="5" width="15" height="9" rx="3" fill="#2c2c2c" /><circle cx="6" cy="9" r="4" fill="#c8c8c8" /></svg></button>
                        </div>
                        <div class="chart">
                          <figure class="raised heat">
                            <figcaption class="side">Range (m)</figcaption>
                            <ul class="yticks"><li v-for="t in heightTicks" :key="t">{{ t }}</li></ul>
                            <canvas ref="dopplerMap" width="478" height="267"></canvas>
                            <ul class="xticks"><li><span>1554525</span></li><li><span>1555024</span></li></ul>
                          </figure>
                          <div class="ramp">
                            <span class="ramp-bar second"></span>
                            <ul><li>4.0</li><li>0.0</li><li>-4.0</li></ul>
                            <p>Velocity (m/s)</p>
                          </div>
                        </div>
                      </div>
                    </div>
                  </div>
                </div>
              </div>
            </section>
          </div>

          <footer class="bar guest-bar">
            <button class="orb" aria-label="Start"><svg><use href="#orb" /></svg></button>
            <div class="tasks">
              <button v-for="t in remoteTasks" :key="t.name" :aria-label="t.name" :class="{ stacked: t.stacked, active: t.active }">
                <svg viewBox="0 0 32 32">
                  <use :href="'#' + t.icon" />
                  <text v-for="l in lettering[t.icon] ?? []" :key="l.text" :x="l.x" :y="l.y" :font-size="l.size" :fill="l.fill ?? '#000'" :class="{ mono: l.mono }">{{ l.text }}</text>
                </svg>
              </button>
            </div>
            <div class="tray">
              <svg class="caret"><use href="#caret" /></svg>
              <svg><use href="#speaker" /></svg>
              <svg><use href="#flag" /></svg>
              <time>16:50<br />13/08/2023</time>
              <button class="peek-btn" aria-label="Show desktop"></button>
            </div>
          </footer>
        </div>
      </section>

      <svg class="cursor" viewBox="0 0 13 20"><path d="M1 1v16l4-4 2.500 6 3-1.500L8 12h4.500z" fill="#fff" stroke="#000" /></svg>
    </main>

    <footer class="bar host-bar">
      <button class="orb" aria-label="Start"><svg><use href="#orb" /></svg></button>
      <div class="pinned">
        <button v-for="t in hostTasks" :key="t.name" :aria-label="t.name"><svg><use :href="'#' + t.icon" /></svg></button>
      </div>
      <button class="running" aria-label="Remote Desktop Connection"><svg><use href="#rdp" /></svg></button>
      <div class="tray">
        <svg class="caret"><use href="#caret" /></svg>
        <svg><use href="#flag-alert" /></svg>
        <svg><use href="#battery" /></svg>
        <svg><use href="#network" /></svg>
        <svg><use href="#speaker-off" /></svg>
        <time>16:50<br />13/08/2023</time>
        <button class="peek-btn" aria-label="Show desktop"></button>
      </div>
    </footer>
  </div>
</template>

<style>
body {
  margin: 0;
  background: #0037b4;
}
</style>

<style scoped>
* {
  box-sizing: border-box;
}
.screen {
  display: flex;
  flex-direction: column;
  height: 100vh;
  overflow: hidden;
  font-family: 'Open Sans', 'Noto Sans', sans-serif;
  font-size: 12px;
  color: #000;
}
ul,
p,
h1,
h2,
h3,
figure {
  margin: 0;
  padding: 0;
  list-style: none;
  font-weight: 400;
}
button,
input {
  font: inherit;
  color: inherit;
  margin: 0;
  padding: 0;
  border: 0;
  background: none;
}
svg {
  display: block;
  flex: none;
}
.mono {
  font-family: 'Liberation Mono', monospace;
}
.sprite {
  position: absolute;
  width: 0;
  height: 0;
}

/* Host desktop */
.desktop {
  position: relative;
  flex: 1;
  min-height: 0;
  background:
    linear-gradient(45deg, transparent 42%, rgba(10, 90, 220, 0.3) 50%, transparent 57%) 0 510px / 260px 260px no-repeat,
    radial-gradient(ellipse 1000px 260px at 72% 0, rgba(60, 145, 255, 0.75), transparent),
    radial-gradient(ellipse 420px 620px at 96% 12%, rgba(30, 110, 235, 0.55), transparent),
    radial-gradient(ellipse 600px 260px at 100% 100%, rgba(10, 100, 225, 0.55), transparent),
    linear-gradient(#0038b4, #0036b2);
}
.shortcuts li {
  display: flex;
  flex-direction: column;
  align-items: center;
  color: #fff;
  white-space: nowrap;
}
.pic {
  position: relative;
}
.pic .badge {
  position: absolute;
  left: 0;
  bottom: 0;
}
.host {
  width: 94px;
  padding-top: 7px;
}
.host li {
  height: 129px;
  font-size: 14px;
  line-height: 20px;
  text-shadow: 1px 1px 2px #000, 0 1px 3px #000;
}
.host .pic {
  margin-bottom: 4px;
}
.host .art {
  width: 60px;
  height: 60px;
}
.host .badge {
  width: 18px;
  height: 18px;
}
.cursor {
  position: absolute;
  left: 1794px;
  top: 878px;
  width: 13px;
  height: 20px;
}

/* Remote desktop window */
.rdp {
  position: absolute;
  left: 250px;
  right: 214px;
  top: 36px;
  bottom: 52px;
  display: flex;
  flex-direction: column;
  padding: 0 6px 6px;
  border: 1px solid #a9c8f4;
  border-radius: 7px;
  outline: 1px solid #0c2458;
  background:
    linear-gradient(125deg, transparent 20%, rgba(90, 150, 240, 0.3) 24%, transparent 34%) 0 0 / 100% 36px no-repeat,
    linear-gradient(90deg, #2f5fc0, #1c50b4 35%, #4c8bf0 68%, #6fa2f4) 0 0 / 100% 36px no-repeat,
    linear-gradient(#4a78d0, #2350b0 30%, #1d4bae);
  box-shadow: 0 2px 14px 3px rgba(0, 0, 30, 0.7);
}
.rdp-title {
  display: flex;
  align-items: center;
  height: 34px;
  flex: none;
}
.rdp-icon {
  width: 20px;
  height: 20px;
  margin: 2px 3px 0 1px;
}
.rdp-title h1 {
  margin-top: 2px;
  padding: 0 3px 0 2px;
  font-size: 14px;
  line-height: 20px;
  color: #0a0f20;
  border-radius: 10px;
  background: rgba(130, 165, 230, 0.5);
  box-shadow: 0 0 6px 3px rgba(130, 165, 230, 0.5);
}
.rdp-controls {
  display: flex;
  align-self: flex-start;
  margin-left: auto;
  height: 24px;
  border: 1px solid #b4d0fa;
  border-top: 0;
  border-radius: 0 0 5px 5px;
}
.rdp-controls button {
  display: flex;
  align-items: center;
  justify-content: center;
  width: 34px;
  border-right: 1px solid #9ec0f6;
}
.rdp-controls .close {
  width: 58px;
  border-right: 0;
}
.rdp-controls svg {
  width: 18px;
  height: 18px;
}
.remote {
  flex: 1;
  min-height: 0;
  display: flex;
  flex-direction: column;
  border: 1px solid #a9c8f4;
  background: #000;
}
.remote-desk {
  position: relative;
  flex: 1;
  min-height: 0;
  overflow: hidden;
}
.guest {
  width: 74px;
  padding-top: 7px;
}
.guest li {
  height: 86px;
  font-size: 11px;
  line-height: 15px;
}
.guest .pic {
  margin-bottom: 3px;
}
.guest .art {
  width: 32px;
  height: 32px;
}
.guest .badge {
  width: 16px;
  height: 16px;
}
.peek {
  position: absolute;
  left: 82px;
  font-size: 11px;
  line-height: 15px;
  color: #fff;
}
.peek.first {
  top: 214px;
}
.peek.second {
  top: 300px;
  left: 77px;
}
.peek-icon {
  position: absolute;
  left: 101px;
  top: 11px;
  width: 20px;
  height: 8px;
}
.note {
  position: absolute;
  right: 72px;
  top: 257px;
  width: 130px;
  height: 165px;
  padding: 34px 0 0 13px;
  background: linear-gradient(#f5f5b4 28px, #fefcc8 28px, #fdf5a6 80%, #fbf69c);
}
.note p {
  font-family: 'Lato', 'Open Sans', sans-serif;
  font-style: italic;
  font-size: 17px;
  line-height: 26px;
}
.grip {
  position: absolute;
  right: 2px;
  bottom: 2px;
  width: 10px;
  height: 10px;
}

/* StreamLine window */
.vi {
  position: absolute;
  left: 86px;
  right: 184px;
  top: 16px;
  bottom: 69px;
  display: flex;
  flex-direction: column;
  padding: 0 7px 7px;
  border: 1px solid #5fd0ea;
  border-top-color: #fff;
  border-radius: 6px 6px 0 0;
  background: linear-gradient(#9db5cf, #bad0e8 32px, #d8e6f4 120px, #b9d1ea 121px);
}
.vi-title {
  display: flex;
  align-items: center;
  flex: none;
  height: 30px;
  padding-top: 4px;
}
.vi-icon {
  width: 16px;
  height: 16px;
  margin: 0 5px 0 1px;
}
.vi-title h2 {
  margin-right: auto;
  font-size: 11px;
}
.vi-title button {
  display: flex;
  align-items: center;
  justify-content: center;
  width: 31px;
  height: 17px;
  margin-right: 2px;
  border: 1px solid #6f8197;
  border-radius: 2px;
  background: linear-gradient(#cddcec 50%, #a9bfd6 50%);
}
.vi-title .dim {
  border-color: #9db2c8;
  background: #bfd2e6;
}
.vi-title button svg {
  width: 12px;
  height: 12px;
}
.vi-client {
  flex: 1;
  min-height: 0;
  display: flex;
  flex-direction: column;
  overflow: hidden;
  border: 1px solid #fff;
  border-top-color: #5c6570;
  border-left-color: #777f88;
  background: #d3d3d3;
}
.tabs {
  display: flex;
  flex: none;
  height: 27px;
  align-items: flex-end;
  padding-left: 2px;
}
.tabs button {
  height: 25px;
  padding: 0 10px 2px;
  font-weight: 700;
  font-size: 12px;
  border: 1px solid #8e8e8e;
  border-bottom: 0;
  border-left-color: #fff;
  background: linear-gradient(#ececec, #d2d2d2);
}
.tabs .on {
  height: 27px;
  padding-bottom: 4px;
  border-color: #fff;
  background: #fff;
}
.page {
  flex: 1;
  min-height: 0;
  margin-right: 16px;
  padding: 14px 2px 0 5px;
  overflow: hidden;
  border-right: 1px solid #808080;
  background: #fff;
}
.frame {
  padding: 12px 12px 0;
  background:
    linear-gradient(#10286c, #27458f 40%, #2a4a98 90%, #14307c) 0 0 / 100% 12px no-repeat,
    #17327e;
}
.board {
  display: flex;
  gap: 10px;
  min-height: 720px;
  padding: 10px 0 0 24px;
  border-left: 1px solid #7d704f;
  border-right: 2px solid #6d6044;
  background: linear-gradient(#a48e6a, #a89470 6px, #948464 13px);
}

/* Left controls */
.left {
  width: 410px;
  flex: none;
  padding-top: 22px;
}
.raised {
  display: grid;
  border-style: solid;
  border-width: 2px 2px 3px 0;
  border-color: #c6b898 #5a4f38 #807252 #c6b898;
  background:
    linear-gradient(90deg, #cbbda0, #b5a88b 100%) 0 0 / 14px 100% no-repeat,
    linear-gradient(90deg, #b5a88b, #7d7156) 100% 0 / 10px 100% no-repeat,
    #b5a88b;
}
.side {
  writing-mode: vertical-rl;
  transform: rotate(180deg);
  justify-self: center;
  align-self: center;
  font-weight: 700;
  font-size: 11px;
  line-height: 14px;
  white-space: nowrap;
}
.graph {
  width: 408px;
  height: 157px;
  padding: 8px 22px 0 21px;
  grid-template: 104px 22px 1fr / 18px 31px 1fr;
}
.velocity {
  margin-top: 34px;
  grid-template-columns: 18px 37px 1fr;
}
.plot {
  width: 100%;
  height: 104px;
  border-bottom: 1px solid #ddd6c4;
}
.yticks {
  display: flex;
  flex-direction: column;
  justify-content: space-between;
  margin: -6px 0;
  font-size: 11px;
  line-height: 14px;
  text-align: right;
}
.yticks li {
  display: flex;
  align-items: center;
  justify-content: flex-end;
  gap: 3px;
}
.yticks li::after {
  content: '';
  width: 5px;
  height: 1px;
  margin-right: 1px;
  background: #000;
}
.xticks {
  grid-column: 3;
  display: flex;
  justify-content: space-between;
  font-size: 11px;
  line-height: 14px;
}
.xticks li {
  display: flex;
  flex-direction: column;
  align-items: center;
  width: 1px;
}
.xticks li::before {
  content: '';
  width: 1px;
  height: 5px;
  flex: none;
  margin: 1px 0;
  background: #000;
}
.xname {
  grid-column: 3;
  text-align: center;
  font-weight: 700;
  font-size: 11px;
  line-height: 18px;
}
.params {
  display: grid;
  grid-template: 81px 1fr / 223px 1fr;
  width: 409px;
  height: 138px;
  margin: 3px 0 0 -1px;
  border: 2px solid #06205e;
  outline: 1px solid #7d8aa8;
  outline-offset: -3px;
}
.cell {
  min-width: 0;
}
.line {
  display: flex;
  align-items: center;
}
.params label {
  font-weight: 700;
  font-size: 11px;
}
.renew {
  border-bottom: 2px solid #06205e;
  padding: 10px 0 0 10px;
}
.rays {
  padding-left: 10px;
  margin-top: 6px;
}
.snr {
  border-top: 1px solid #7d8aa8;
  padding: 13px 0 0 19px;
}
.position {
  grid-column: 2;
  grid-row: 1 / 3;
  border-left: 2px solid #06205e;
  padding: 2px 0 0 1px;
}
.position h3,
.logging h3 {
  font-weight: 700;
  font-size: 11px;
  line-height: 15px;
  color: #0e2a6e;
}
.position .line {
  gap: 4px;
  margin-top: 9px;
  padding-left: 21px;
}
.position .line + .line {
  margin-top: 14px;
}
.position label {
  width: 24px;
  padding-top: 6px;
  font-weight: 400;
  font-size: 17px;
  line-height: 20px;
  text-align: right;
}
.big-num,
.amber,
.doppler-head input {
  border-style: solid;
  border-color: #63543a #a39370 #a79876 #6d5d40;
}
.big-num {
  width: 95px;
  height: 34px;
  padding-left: 3px;
  border-width: 4px;
  font-size: 17px;
  background: #fbfbfb;
}
.key {
  border: 2px solid;
  border-color: #dcdcdc #6f6f6f #6f6f6f #dcdcdc;
  outline: 1px solid #4e4a42;
  outline-offset: -1px;
  background: linear-gradient(#cfcfcf, #b1b1b1);
  font-weight: 700;
  font-size: 12px;
}
.key.big {
  width: 188px;
  height: 36px;
  font-weight: 400;
  font-size: 15px;
  white-space: nowrap;
}
.led {
  width: 16px;
  height: 16px;
  margin-left: 2px;
  border-radius: 50%;
  border: 1px solid #4e4a2c;
  background: radial-gradient(circle at 40% 40%, #3f7a2c, #123c0c 60%);
  box-shadow: 1px 1px 2px #c7b890;
}
.spin {
  width: 12px;
  height: 24px;
  margin-left: 3px;
}
.amber {
  width: 43px;
  height: 24px;
  padding-left: 2px;
  border-width: 3px;
  font-weight: 700;
  font-size: 12px;
  background: #ffc20a;
}
.amber.short {
  width: 29px;
}

.logging {
  width: 420px;
  height: 110px;
  margin: 10px 0 0 -10px;
  padding-left: 2px;
  border: 3px solid #0b2c78;
  outline: 1px solid #8094bc;
}
.log-head {
  display: flex;
  height: 37px;
}
.logging label {
  font-weight: 700;
  font-size: 12px;
  line-height: 18px;
}
.log-names {
  display: flex;
  flex-direction: column;
  justify-content: space-between;
  width: 133px;
  padding-left: 11px;
}
.log-names h3 {
  line-height: 14px;
}
.log-names label {
  padding-left: 4px;
}
.log-head .key {
  width: 134px;
  height: 24px;
  margin-top: 10px;
  white-space: nowrap;
}
.log-head .log-side {
  margin: 12px 0 0 auto;
  padding-right: 12px;
}
.log-row {
  display: flex;
  align-items: center;
  height: 22px;
}
.path {
  display: flex;
  width: 363px;
  height: 22px;
  padding: 3px 4px 3px 1px;
  background: linear-gradient(#6d5d40, #8b7a58 3px, #948464 80%, #a39370);
}
.path span {
  width: 16px;
  padding-left: 3px;
  font-weight: 700;
  font-size: 12px;
  line-height: 16px;
  background: #ffc20a;
}
.path svg {
  width: 9px;
  height: 16px;
  background: #d8d8d4;
}
.path input {
  flex: 1;
  min-width: 0;
  padding-left: 2px;
  font-family: 'Liberation Sans', sans-serif;
  font-size: 8px;
  background: #fbfbfb;
}
.raw-name {
  display: block;
  padding-left: 13px;
}
.oval {
  display: flex;
  align-items: center;
  justify-content: center;
  gap: 2px;
  flex: none;
  width: 43px;
  height: 25px;
  border: 2px solid;
  border-color: #e4e4e0 #55503f #45402f #b0aca0;
  border-radius: 50%;
  font-weight: 600;
  font-size: 12px;
  background: linear-gradient(#c9c9c6, #a3a39c);
  box-shadow: 1px 2px 3px #655838;
}
.oval svg {
  width: 11px;
  height: 14px;
  fill: #234a16;
}
.oval.on {
  background: linear-gradient(#85857f, #a5a59d);
}
.oval.on svg {
  fill: #4cf01c;
}
.actions {
  display: flex;
  gap: 139px;
  margin: 6px 0 0 -1px;
}
.actions .key.big {
  width: 116px;
  height: 50px;
  font-size: 15px;
  line-height: 20px;
}
.actions .key.stop {
  width: 100px;
  color: #d8201c;
}

/* Right charts */
.right {
  flex: 1;
  min-width: 0;
}
.chart-name {
  padding-left: 2px;
  font-size: 14px;
  line-height: 22px;
}
.chart {
  display: flex;
}
.heat {
  flex: 1;
  min-width: 0;
  height: 301px;
  padding: 8px 21px 0 17px;
  grid-template: 267px 1fr / 18px 38px 1fr;
}
.heat canvas {
  width: 100%;
  height: 267px;
  border-bottom: 1px solid #ddd6c4;
}
.heat .yticks,
.heat .xticks {
  font-weight: 600;
  font-size: 12px;
}
.ramp {
  display: flex;
  width: 82px;
  flex: none;
  height: 150px;
  margin-top: 1px;
}
.ramp-bar {
  width: 20px;
  margin-left: 1px;
  border: 1px solid #e060d8;
}
.ramp-bar.first {
  background: linear-gradient(#000 3px, #fff 3px 5px, #900096 5px, #c80054 16%, #f00 25%, #ffa000 30%, #ffc000 33%, #ffff30 41%, #0f0 53%, #209678 69%, #3030ff 83%, #c8c8cc 94%, #fff 94% 96%, #f050e0 96% 97%, #000 97%);
}
.ramp-bar.second {
  background: linear-gradient(#f01ee6 4px, #000 4px 6px, #900096 6px, #c80054 16%, #f00 25%, #ffa000 30%, #ffc000 33%, #ffff30 41%, #0f0 53%, #209678 69%, #3030ff 83%, #c8c8cc 94%, #fff 94% 96%, #000 96%);
  border-color: #333;
}
.ramp ul {
  display: flex;
  flex-direction: column;
  justify-content: space-between;
  width: 39px;
  font-weight: 600;
  font-size: 12px;
  line-height: 12px;
}
.ramp li {
  display: flex;
  align-items: center;
  gap: 1px;
}
.ramp li::before {
  content: '';
  width: 5px;
  height: 1px;
  margin-left: 3px;
  background: #000;
}
.ramp p {
  writing-mode: vertical-rl;
  text-align: center;
  font-weight: 700;
  font-size: 11px;
  line-height: 14px;
}
.doppler-head {
  display: flex;
  align-items: center;
  height: 26px;
  padding: 2px 108px 0 0;
}
.doppler-head .chart-name {
  flex: 1;
}
.doppler-head label,
.switch-name {
  font-weight: 700;
  font-size: 11px;
}
.doppler-head input {
  width: 29px;
  height: 21px;
  margin: 0 4px;
  padding-left: 2px;
  border-width: 3px;
  font-weight: 600;
  font-size: 12px;
  background: #d8d8d8;
}
.switch-name {
  margin: 0 12px 0 98px;
}
.switch svg {
  width: 26px;
  height: 22px;
}

/* Taskbars */
.bar {
  display: flex;
  flex: none;
  align-items: stretch;
}
.tray {
  display: flex;
  align-items: center;
  margin-left: auto;
  color: #fff;
}
.tray time {
  text-align: center;
  white-space: nowrap;
}
.peek-btn {
  align-self: stretch;
  width: 14px;
  border: 1px solid rgba(220, 235, 250, 0.6);
  border-left-color: #1c2c44;
  background: linear-gradient(rgba(255, 255, 255, 0.35), rgba(0, 10, 30, 0.25) 40%);
}
.guest-bar {
  height: 40px;
  border-top: 1px solid #d5e2ef;
  background: linear-gradient(90deg, #8397ae 55px, #a9c0dc 70px, #a9c0dc calc(100% - 205px), #8296ad calc(100% - 175px));
}
.guest-bar .orb {
  width: 54px;
}
.guest-bar .orb svg {
  width: 38px;
  height: 38px;
  margin: auto;
}
.tasks {
  display: flex;
  gap: 3px;
  margin-left: 6px;
}
.tasks button {
  width: 59px;
  border: 1px solid #5f7690;
  border-radius: 3px;
  box-shadow: inset 0 0 0 1px #dde8f4;
  background: linear-gradient(160deg, #dbe6f2, #a9c0d8 50%, #b4c9e0);
}
.tasks .stacked {
  border-right-width: 5px;
  border-right-style: double;
}
.tasks .active {
  background: linear-gradient(160deg, #f8fbfd, #cfdcea 55%, #e4ecf5);
}
.tasks button svg {
  width: 32px;
  height: 32px;
  margin: auto;
}
.guest-bar .tray svg {
  width: 17px;
  height: 17px;
  margin-right: 7px;
}
.guest-bar .tray .caret {
  width: 10px;
  height: 10px;
  margin-right: 12px;
}
.guest-bar time {
  margin: 0 12px 0 10px;
  font-size: 11px;
  line-height: 17px;
}
.host-bar {
  height: 48px;
  border-top: 1px solid #7f9fd6;
  outline: 1px solid #0a1a44;
  background: linear-gradient(90deg, #1f3a78, #21408c 4%, #22418a 45%, #2c5298 60%, #2c54a0 calc(100% - 300px), #1d3a6e calc(100% - 270px), #24467c calc(100% - 150px), #1c3a72);
}
.host-bar .orb {
  width: 66px;
}
.host-bar .orb svg {
  width: 46px;
  height: 46px;
  margin: auto;
}
.pinned {
  display: flex;
  gap: 30px;
  padding-left: 19px;
}
.pinned svg {
  width: 40px;
  height: 40px;
}
.running {
  width: 67px;
  margin-left: 16px;
  border: 1px solid #dfe8f6;
  border-right: 6px double #b8c8e4;
  border-radius: 3px;
  background: linear-gradient(150deg, #c9d3ea, #7f93c4 55%, #a8b8dc);
}
.running svg {
  width: 40px;
  height: 42px;
  margin: auto;
}
.host-bar .tray svg {
  width: 20px;
  height: 20px;
  margin-right: 10px;
}
.host-bar .tray .caret {
  width: 11px;
  height: 11px;
  margin-right: 18px;
}
.host-bar time {
  margin: 0 14px 0 11px;
  font-size: 14px;
  line-height: 22px;
}
</style>
